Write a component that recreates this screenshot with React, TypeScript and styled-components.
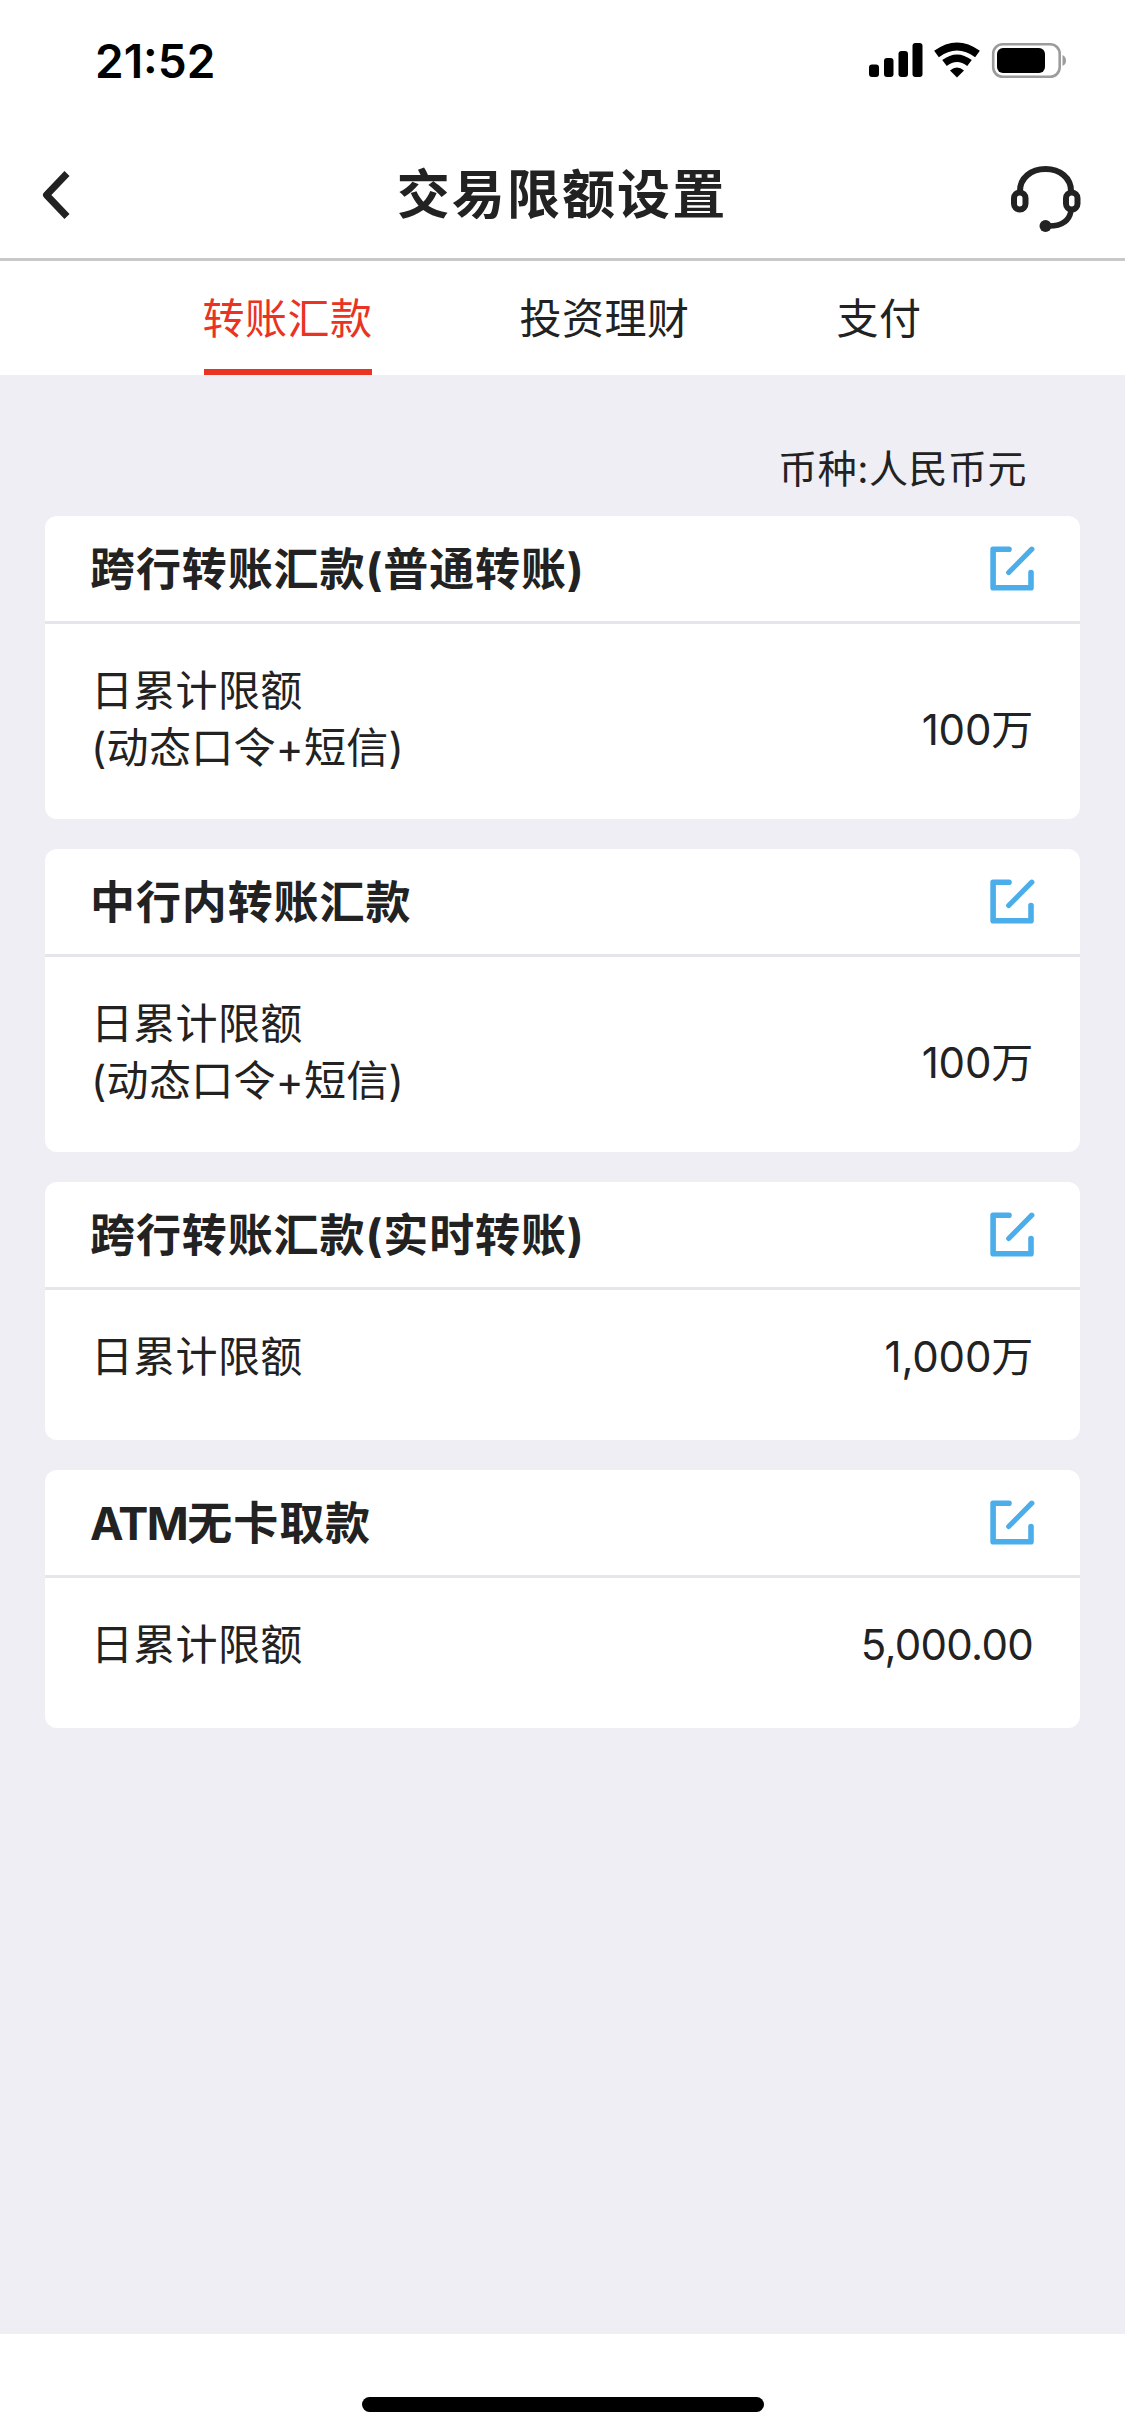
import React from 'react';
import styled, { createGlobalStyle } from 'styled-components';

const GlobalStyle = createGlobalStyle`
  * { box-sizing: border-box; }
  body { margin: 0; background: #fff; }
`;

const Screen = styled.div`
  width: 1125px;
  height: 2436px;
  display: flex;
  flex-direction: column;
  background: #fff;
  color: #222;
  font-family: Inter, "Noto Sans CJK SC", sans-serif;
`;

const StatusBar = styled.header`
  height: 132px;
  padding: 0 58px 0 95px;
  display: flex;
  justify-content: space-between;
  color: #000;
`;

const Clock = styled.time`
  margin-top: 32px;
  font-size: 46px;
  line-height: 58px;
  font-weight: 600;
`;

const StatusIcons = styled.svg`
  width: 200px;
  height: 40px;
  margin-top: 41px;
`;

const NavBar = styled.nav`
  height: 129px;
  padding: 0 44px 0 42px;
  display: grid;
  grid-template-columns: 70px 1fr 70px;
  align-items: center;
  border-bottom: 3px solid #c8c8c8;
`;

const IconButton = styled.button<{ $drop?: number }>`
  display: flex;
  margin-top: ${(p) => p.$drop ?? 0}px;
  padding: 0;
  border: 0;
  background: none;

  svg {
    overflow: visible;
  }
`;

const NavTitle = styled.h1`
  margin: 0;
  padding-left: 1px;
  text-align: center;
  font-size: 53px;
  line-height: 80px;
  font-weight: 700;
  letter-spacing: 2.1px;
`;

const Tabs = styled.div`
  height: 114px;
  display: flex;
  justify-content: center;
  gap: 149px;
`;

const Tab = styled.div<{ $chars: number; $active?: boolean }>`
  width: ${(p) => p.$chars * 42}px;
  height: 114px;
  padding-top: 28px;
  font-size: 42px;
  line-height: 60px;
  text-indent: -1px;
  letter-spacing: 0.5px;
  white-space: nowrap;
  color: ${(p) => (p.$active ? '#e93323' : '#222')};
  border-bottom: 6px solid ${(p) => (p.$active ? '#e93323' : 'transparent')};
`;

const Content = styled.main`
  flex: 1;
  padding: 65px 45px 0;
  background: #efeef5;
`;

const Currency = styled.p`
  margin: 0;
  height: 76px;
  padding-right: 53px;
  text-align: right;
  font-size: 39px;
  line-height: 58px;
  letter-spacing: 0.5px;
`;

const CardList = styled.div`
  display: flex;
  flex-direction: column;
  gap: 30px;
`;

const Card = styled.section`
  border-radius: 12px;
  background: #fff;
`;

const CardHeader = styled.div`
  height: 108px;
  padding: 0 46px 0 45px;
  display: flex;
  align-items: center;
  justify-content: space-between;
  border-bottom: 3px solid #e6e5eb;
`;

const CardTitle = styled.h2`
  margin: 2px 0 0;
  font-size: 45px;
  line-height: 66px;
  font-weight: 700;
  letter-spacing: 0.9px;
`;

const LatinPrefix = styled.span`
  letter-spacing: -1.4px;
`;

const CardBody = styled.div<{ $tall: boolean }>`
  height: ${(p) => (p.$tall ? 195 : 150)}px;
  padding: 38px 47px 0 46px;
  display: flex;
  justify-content: space-between;
`;

const Label = styled.div`
  font-size: 42px;
  line-height: 57px;
  letter-spacing: 0.3px;
`;

const Amount = styled.div<{ $tall: boolean; $numeric: boolean }>`
  margin-top: ${(p) => (p.$tall ? 39 : 0)}px;
  font-size: 42px;
  line-height: 57px;
  letter-spacing: ${(p) => (p.$numeric ? '-0.7px' : '-0.2px')};
`;

const HomeArea = styled.footer`
  height: 102px;
  padding-top: 63px;
  display: flex;
  justify-content: center;
`;

const HomeIndicator = styled.div`
  width: 402px;
  height: 15px;
  border-radius: 8px;
  background: #000;
`;

const StatusGlyphs = () => (
  <StatusIcons viewBox="0 0 200 40">
    <rect x="2" y="23.500" width="10" height="12.500" rx="3" />
    <rect x="17" y="17" width="9.500" height="19" rx="3" />
    <rect x="31.500" y="10" width="9.500" height="26" rx="3" />
    <rect x="45.500" y="2" width="10" height="34" rx="3" />
    <g fill="none" stroke="#000">
      <path d="M69.500 13Q90 -2 110.500 13" strokeWidth="8" />
      <path d="M77.500 22Q90 12.500 102.500 22" strokeWidth="7.500" />
    </g>
    <path d="M83 29.500Q90 23.500 97 29.500L90 36.500Z" />
    <rect x="126.200" y="3.200" width="66.500" height="32.600" rx="9.500" fill="none" stroke="#9c9c9c" strokeWidth="2.600" />
    <rect x="130" y="7" width="48" height="25" rx="6" />
    <path d="M195.500 14Q199 15.500 199 19.500Q199 23.500 195.500 25Z" fill="#9c9c9c" />
  </StatusIcons>
);

const BackIcon = () => (
  <svg width="28" height="50" viewBox="0 0 28 50" fill="none" stroke="#222" strokeWidth="7" strokeLinejoin="round">
    <path d="M25 3.500L4.500 25L25 46.500" />
  </svg>
);

const HeadsetIcon = () => (
  <svg width="70" height="68" viewBox="0 0 70 68" fill="none" stroke="#222" strokeWidth="6">
    <path d="M9 25C9 12 20 3 34.500 3S60 12 60 25" />
    <rect x="3" y="26.500" width="11.500" height="17" rx="5.700" />
    <rect x="55" y="26.500" width="11.500" height="17" rx="5.700" />
    <path d="M60 45C58 56 49 60.500 36 60" strokeWidth="5.500" />
    <circle cx="34.500" cy="60" r="6" fill="#222" stroke="none" />
  </svg>
);

const EditIcon = () => (
  <svg width="44" height="46" viewBox="0 0 44 46" fill="none" stroke="#4baeeb" strokeWidth="5.600" strokeLinecap="round" strokeLinejoin="round">
    <path d="M19 3.200H3.100V41.700H41V26.500" />
    <path d="M18.700 26.500L41.800 3.200" strokeWidth="5.200" />
  </svg>
);

const tabs = ['转账汇款', '投资理财', '支付'];

const limits = [
  { title: '跨行转账汇款(普通转账)', method: '(动态口令+短信)', amount: '100万' },
  { title: '中行内转账汇款', method: '(动态口令+短信)', amount: '100万' },
  { title: '跨行转账汇款(实时转账)', amount: '1,000万' },
  { prefix: 'ATM', title: '无卡取款', amount: '5,000.00' },
];

export default function App() {
  return (
    <Screen>
      <GlobalStyle />
      <StatusBar>
        <Clock>21:52</Clock>
        <StatusGlyphs />
      </StatusBar>
      <NavBar>
        <IconButton><BackIcon /></IconButton>
        <NavTitle>交易限额设置</NavTitle>
        <IconButton $drop={10}><HeadsetIcon /></IconButton>
      </NavBar>
      <Tabs>
        {tabs.map((name, i) => (
          <Tab key={name} $chars={name.length} $active={i === 0}>{name}</Tab>
        ))}
      </Tabs>
      <Content>
        <Currency>币种:人民币元</Currency>
        <CardList>
          {limits.map(({ prefix, title, method, amount }) => (
            <Card key={title}>
              <CardHeader>
                <CardTitle>
                  {prefix && <LatinPrefix>{prefix}</LatinPrefix>}
                  {title}
                </CardTitle>
                <IconButton><EditIcon /></IconButton>
              </CardHeader>
              <CardBody $tall={!!method}>
                <Label>
                  <div>日累计限额</div>
                  {method && <div>{method}</div>}
                </Label>
                <Amount $tall={!!method} $numeric={!amount.endsWith('万')}>{amount}</Amount>
              </CardBody>
            </Card>
          ))}
        </CardList>
      </Content>
      <HomeArea>
        <HomeIndicator />
      </HomeArea>
    </Screen>
  );
}
